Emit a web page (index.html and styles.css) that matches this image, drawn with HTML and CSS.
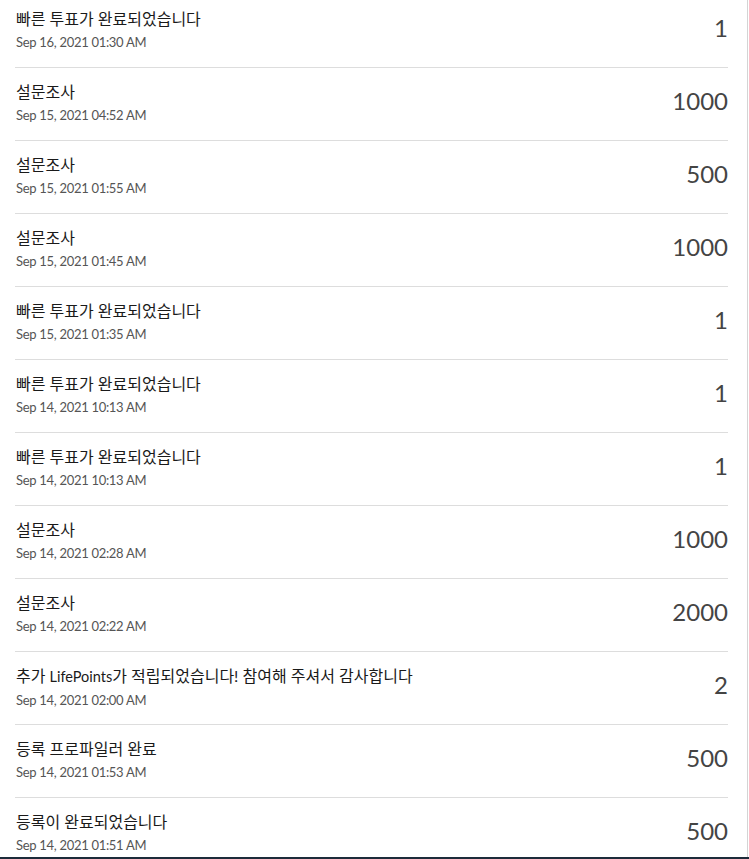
FILE: index.html
```html
<!DOCTYPE html>
<html lang="ko">
<head>
<meta charset="utf-8">
<link rel="stylesheet" href="styles.css">
</head>
<body>
<div class="frame">
  <ul class="list">
    <li class="row"><div class="info"><div class="title">빠른 투표가 완료되었습니다</div><div class="date">Sep 16, 2021 01:30 AM</div></div><div class="points">1</div></li>
    <li class="row"><div class="info"><div class="title">설문조사</div><div class="date">Sep 15, 2021 04:52 AM</div></div><div class="points">1000</div></li>
    <li class="row"><div class="info"><div class="title">설문조사</div><div class="date">Sep 15, 2021 01:55 AM</div></div><div class="points">500</div></li>
    <li class="row"><div class="info"><div class="title">설문조사</div><div class="date">Sep 15, 2021 01:45 AM</div></div><div class="points">1000</div></li>
    <li class="row"><div class="info"><div class="title">빠른 투표가 완료되었습니다</div><div class="date">Sep 15, 2021 01:35 AM</div></div><div class="points">1</div></li>
    <li class="row"><div class="info"><div class="title">빠른 투표가 완료되었습니다</div><div class="date">Sep 14, 2021 10:13 AM</div></div><div class="points">1</div></li>
    <li class="row"><div class="info"><div class="title">빠른 투표가 완료되었습니다</div><div class="date">Sep 14, 2021 10:13 AM</div></div><div class="points">1</div></li>
    <li class="row"><div class="info"><div class="title">설문조사</div><div class="date">Sep 14, 2021 02:28 AM</div></div><div class="points">1000</div></li>
    <li class="row"><div class="info"><div class="title">설문조사</div><div class="date">Sep 14, 2021 02:22 AM</div></div><div class="points">2000</div></li>
    <li class="row"><div class="info"><div class="title">추가 <span class="latin">LifePoints</span>가 적립되었습니다! 참여해 주셔서 감사합니다</div><div class="date">Sep 14, 2021 02:00 AM</div></div><div class="points">2</div></li>
    <li class="row"><div class="info"><div class="title">등록 프로파일러 완료</div><div class="date">Sep 14, 2021 01:53 AM</div></div><div class="points">500</div></li>
    <li class="row"><div class="info"><div class="title">등록이 완료되었습니다</div><div class="date">Sep 14, 2021 01:51 AM</div></div><div class="points">500</div></li>
  </ul>
</div>
<div class="footer-bar"></div>
</body>
</html>
```

FILE: styles.css
```css
html, body {
  margin: 0;
  padding: 0;
  background: #ffffff;
  overflow: hidden;
}

.frame {
  width: 747px;
  height: 857px;
  border-right: 1px solid #d4d4d4;
  overflow: hidden;
  box-sizing: content-box;
}

.list {
  list-style: none;
  margin: -5px 0 0 0;
  padding: 0;
}

.row {
  display: flex;
  justify-content: space-between;
  align-items: flex-start;
  margin: 0 19px 0 15px;
  padding: 14px 0 16px 1px;
  border-bottom: 1px solid #dddddd;
  height: 42px;
}

.info {
  display: flex;
  flex-direction: column;
  gap: 4px;
}

.title {
  font-family: "Lato", "Noto Sans CJK KR", sans-serif;
  font-size: 16px;
  line-height: 20px;
  color: #1a1a1a;
  letter-spacing: 0;
}

.title .latin {
  font-size: 14.5px;
}

.date {
  font-family: "Lato", sans-serif;
  font-size: 13px;
  line-height: 18px;
  color: #555555;
  letter-spacing: -0.3px;
}

.points {
  font-family: "Lato", sans-serif;
  font-size: 24px;
  line-height: 29px;
  color: #444444;
  margin-top: 4px;
}

.footer-bar {
  height: 2px;
  width: 749px;
  background: #1d2b3a;
}
```
